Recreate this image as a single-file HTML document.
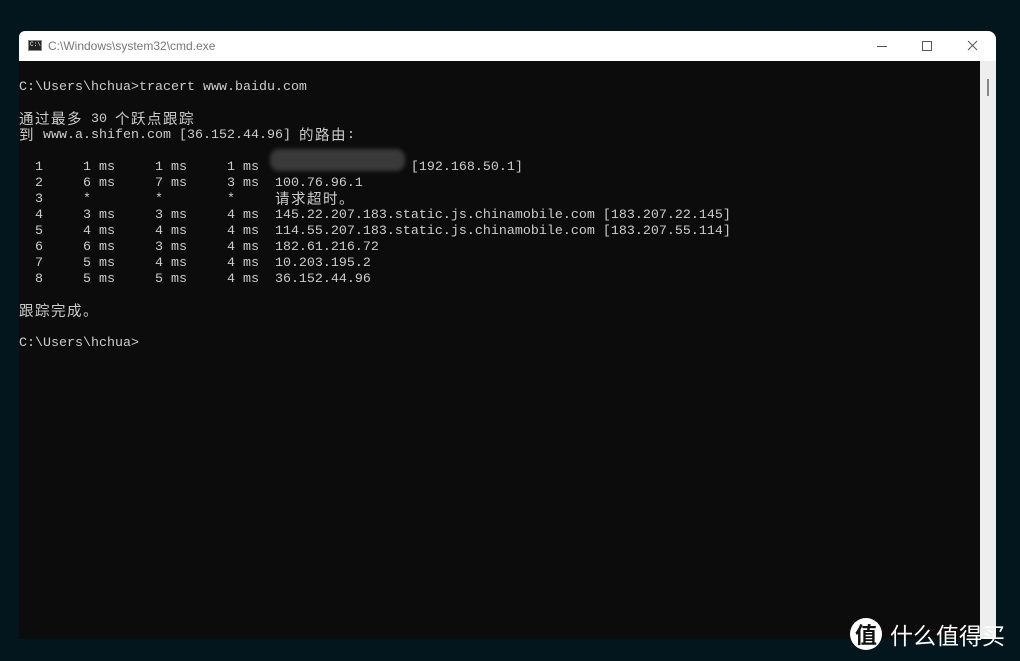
<!DOCTYPE html>
<html><head><meta charset="utf-8"><style>
body{margin:0;width:1020px;height:661px;background:#04161d;position:relative;overflow:hidden;font-family:"Liberation Sans",sans-serif}
.win{position:absolute;left:19px;top:31px;width:977px;height:608px;background:#0c0c0c;border-radius:6px 8px 0 0;overflow:hidden}
.title{height:30px;background:#fff;position:relative;color:#777;font-size:12px}
.title .ic{position:absolute;left:9px;top:9px;width:14px;height:11px;background:#222;border:1px solid #888;box-sizing:border-box}
.title .ic:after{content:"C:\\";position:absolute;left:1px;top:0;color:#fff;font-size:6px;font-family:"Liberation Mono",monospace}
.title .t{position:absolute;left:29px;top:8px}
.sb{position:absolute;right:0;top:30px;width:16px;bottom:0;background:#eeeeee}
.sb:after{content:"";position:absolute;left:7px;top:18px;width:2px;height:17px;background:#888}
pre{position:absolute;left:0;top:49px;margin:0;color:#cccccc;font-family:"Liberation Mono",monospace;font-size:13.33px;line-height:16px}
.c{font-family:"Noto Sans CJK SC",sans-serif;font-size:14.5px;letter-spacing:1.5px;line-height:14px;display:inline-block;height:16px;vertical-align:top;overflow:visible}
.blur{position:absolute;left:251px;top:118px;width:135px;height:22px;background:#3a3a3a;border-radius:9px;filter:blur(2px)}
.wm{position:absolute;left:850px;top:617px;color:#fff;font-family:"Noto Sans CJK SC",sans-serif;font-size:23px;display:flex;align-items:center}
.wm .o{width:32px;height:32px;border-radius:50%;background:#fff;color:#111;font-size:22px;text-align:center;line-height:32px;margin-right:8px;font-weight:bold}
</style></head><body>
<div class="win">
<div class="title"><div class="ic"></div><div class="t">C:\Windows\system32\cmd.exe</div>
<svg style="position:absolute;left:850px;top:8px" width="120" height="14"><path d="M8 7.5h10" stroke="#555" stroke-width="1"/><rect x="53.5" y="2.5" width="9" height="9" fill="none" stroke="#555"/><path d="M99 2l9 9M108 2l-9 9" stroke="#555"/></svg></div>
<div class="sb"></div>
<div class="blur"></div>
<pre>C:\Users\hchua&gt;tracert www.baidu.com

<span class="c">通过最多</span> 30 <span class="c">个跃点跟踪</span>
<span class="c">到</span> www.a.shifen.com [36.152.44.96] <span class="c">的路由</span>:

  1     1 ms     1 ms     1 ms                   [192.168.50.1]
  2     6 ms     7 ms     3 ms  100.76.96.1
  3     *        *        *     <span class="c">请求超时。</span>
  4     3 ms     3 ms     4 ms  145.22.207.183.static.js.chinamobile.com [183.207.22.145]
  5     4 ms     4 ms     4 ms  114.55.207.183.static.js.chinamobile.com [183.207.55.114]
  6     6 ms     3 ms     4 ms  182.61.216.72
  7     5 ms     4 ms     4 ms  10.203.195.2
  8     5 ms     5 ms     4 ms  36.152.44.96

<span class="c">跟踪完成。</span>

C:\Users\hchua&gt;</pre>
</div>
<div class="wm"><div class="o">值</div>什么值得买</div>
</body></html>
